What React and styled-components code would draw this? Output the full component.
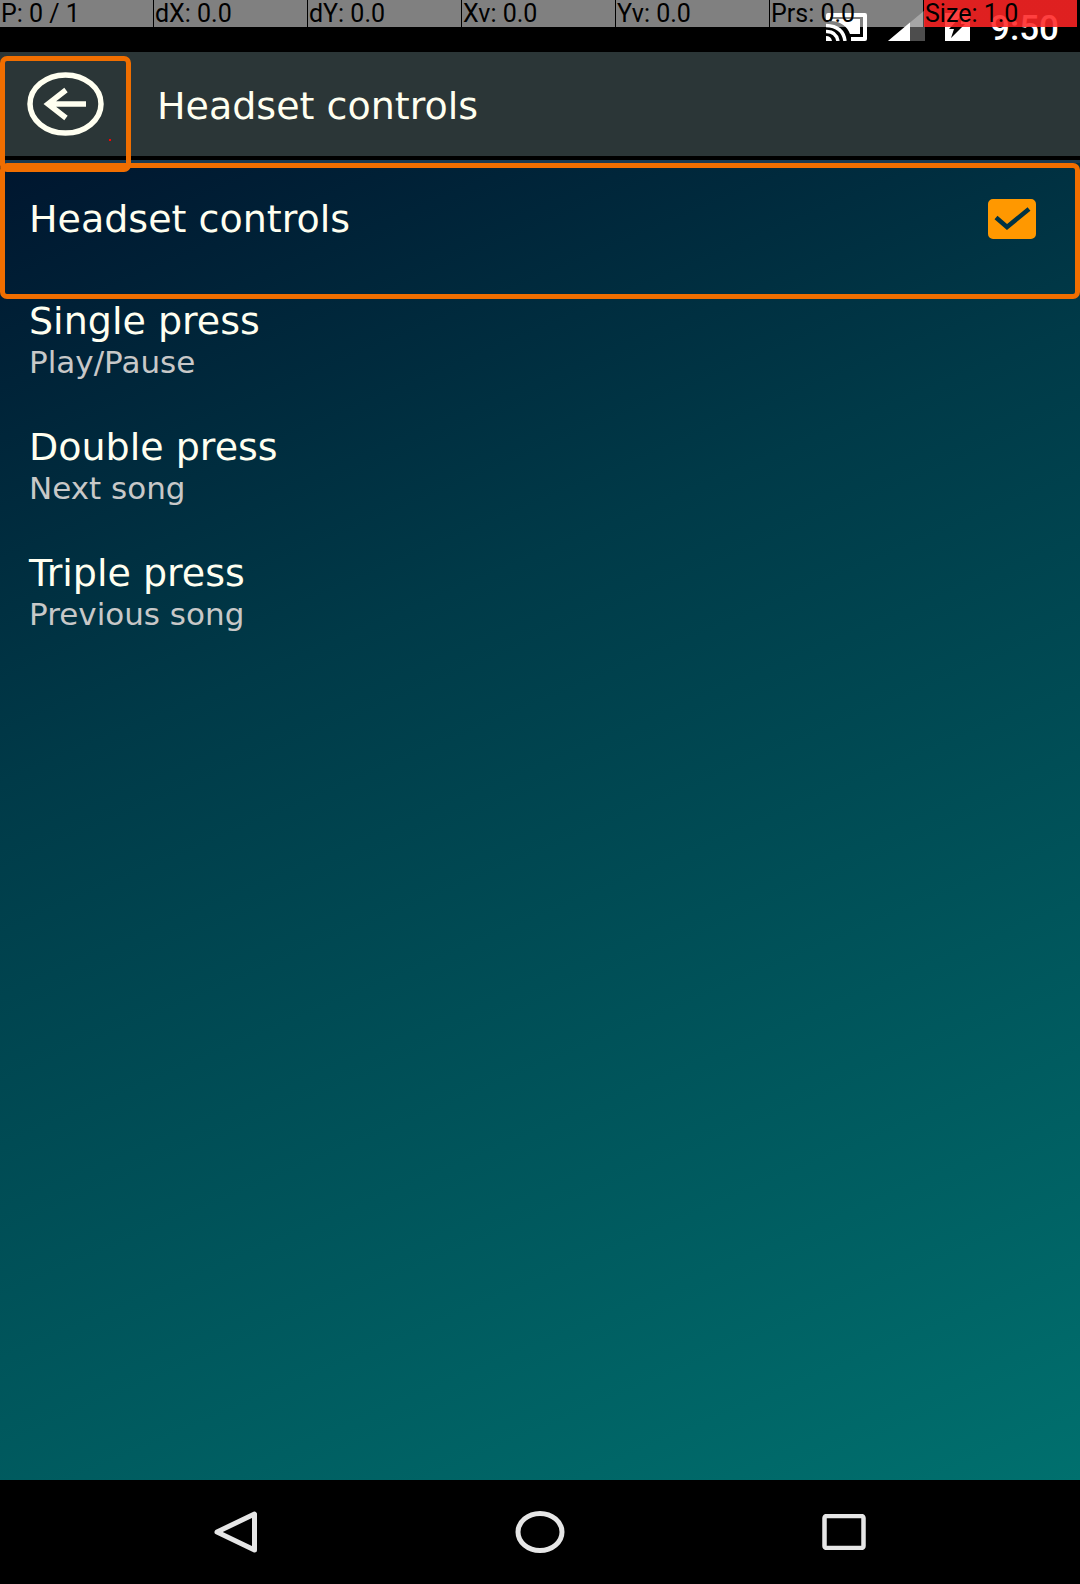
import React, { useState } from "react";
import styled, { createGlobalStyle } from "styled-components";

const sans = '"DejaVu Sans", sans-serif';
const roboto = 'Roboto, "Liberation Sans", sans-serif';
const orange = "#f06e00";

const GlobalStyle = createGlobalStyle`
  * { box-sizing: border-box; }
  body { margin: 0; background: #000; }
`;

const Screen = styled.div`
  display: flex;
  flex-direction: column;
  min-height: 100vh;
  background: #000;
  font-family: ${sans};
`;

const StatusBar = styled.div`
  position: relative;
  display: flex;
  justify-content: flex-end;
  align-items: flex-end;
  height: 52px;
  padding: 0 21px 11px 0;
  background: #000;
  color: #fff;
`;

const StatusIcons = styled.div`
  display: flex;
  align-items: flex-end;
  gap: 20px;
  svg { display: block; }
`;

const Clock = styled.time`
  font: 500 35px/24px ${roboto};
`;

const PointerBar = styled.div`
  position: absolute;
  top: 0;
  left: 0;
  right: 0;
  display: grid;
  grid-template-columns: repeat(7, 1fr);
  gap: 1px;
  height: 27px;
  padding-right: 3px;
`;

const PointerCell = styled.span`
  padding-left: 1px;
  font: 400 25px/27px ${roboto};
  white-space: nowrap;
  color: #000;
  background: ${(p) =>
    p.$hot
      ? "linear-gradient(rgba(255, 0, 0, 0.75), rgba(255, 0, 0, 0.75)), rgba(255, 255, 255, 0.5)"
      : "rgba(255, 255, 255, 0.5)"};
`;

const AppBar = styled.header`
  display: flex;
  align-items: center;
  gap: 26px;
  height: 108px;
  background: #2b3637;
  border-bottom: 4px solid #000;
`;

const BackButton = styled.button`
  position: relative;
  align-self: stretch;
  display: flex;
  align-items: center;
  width: 131px;
  padding: 0 0 0 26px;
  border: 0;
  background: none;
  &::before {
    content: "";
    position: absolute;
    right: 20px;
    bottom: 15px;
    width: 2px;
    height: 2px;
    background: #f00;
  }
  &::after {
    content: "";
    position: absolute;
    z-index: 1;
    inset: 4px 0 -16px;
    border: 5px solid ${orange};
    border-radius: 7px;
  }
`;

const Title = styled.h1`
  margin: 0;
  padding-top: 4px;
  font: 400 38px/44px ${sans};
  color: #fffff0;
`;

const Settings = styled.main`
  flex: 1;
  border-top: 3px solid #1b3a50;
  background: linear-gradient(157deg, #00162f 0%, #003a48 35%, #00706e 100%);
`;

const ToggleRow = styled.label`
  display: flex;
  justify-content: space-between;
  align-items: center;
  height: 136px;
  padding: 0 39px 24px 24px;
  border: 5px solid ${orange};
  border-radius: 7px;
  font-size: 38px;
  line-height: 44px;
  color: #fffff0;
`;

const CheckWrap = styled.span`
  display: grid;
  > * { grid-area: 1 / 1; }
  svg { pointer-events: none; visibility: hidden; }
  input:checked + svg { visibility: visible; }
`;

const Checkbox = styled.input`
  appearance: none;
  width: 48px;
  height: 40px;
  margin: 0;
  border: 4px solid #ff9800;
  border-radius: 5px;
  &:checked { background: #ff9800; }
`;

const ActionRow = styled.button`
  display: flex;
  flex-direction: column;
  align-items: flex-start;
  width: 100%;
  height: 126px;
  padding: 0 29px;
  border: 0;
  background: none;
  text-align: left;
`;

const ActionName = styled.span`
  font: 400 38px/44px ${sans};
  color: #fffff0;
`;

const ActionValue = styled.span`
  font: 400 31px/38px ${sans};
  color: #c8c8c8;
`;

const NavBar = styled.nav`
  display: flex;
  justify-content: center;
  height: 104px;
  background: #000;
`;

const NavButton = styled.button`
  display: grid;
  place-items: center;
  flex: 0 1 304px;
  padding: 0;
  border: 0;
  background: none;
`;

const readings = ["P: 0 / 1", "dX: 0.0", "dY: 0.0", "Xv: 0.0", "Yv: 0.0", "Prs: 0.0", "Size: 1.0"];

const actions = [
  { name: "Single press", value: "Play/Pause" },
  { name: "Double press", value: "Next song" },
  { name: "Triple press", value: "Previous song" },
];

const CastIcon = () => (
  <svg width="42" height="28" viewBox="0 0 42 28">
    <path d="M2 9V2H39V26H25" fill="none" stroke="#fff" strokeWidth="4" strokeLinejoin="round" />
    <path d="M6 6H34V21H24C21 13 15 9 6 8Z" fill="#fff" />
    <path d="M0 23Q5 23 6 28H0Z" fill="#fff" />
    <path d="M0 18.5Q10 18 12 28M0 12.5Q17 13 19 28" fill="none" stroke="#fff" strokeWidth="3.5" />
  </svg>
);

const SignalIcon = () => (
  <svg width="37" height="31" viewBox="0 0 37 31">
    <path d="M37 0V31H0Z" fill="#fff" fillOpacity="0.3" />
    <path d="M22 12.5V31H0Z" fill="#fff" />
  </svg>
);

const BatteryIcon = () => (
  <svg width="25" height="31" viewBox="0 0 25 31">
    <path d="M0 3H8V0H17V3H25V31H0Z" fill="#fff" />
    <path d="M16 6V14H20L6 28L9 19H4Z" fill="#000" />
  </svg>
);

export default function App() {
  const [enabled, setEnabled] = useState(true);

  return (
    <Screen>
      <GlobalStyle />
      <StatusBar>
        <StatusIcons>
          <CastIcon />
          <SignalIcon />
          <BatteryIcon />
          <Clock>9:50</Clock>
        </StatusIcons>
        <PointerBar>
          {readings.map((text) => (
            <PointerCell key={text} $hot={text.startsWith("Size")}>{text}</PointerCell>
          ))}
        </PointerBar>
      </StatusBar>
      <AppBar>
        <BackButton aria-label="Back">
          <svg width="78" height="64" viewBox="0 0 78 64" fill="none" stroke="#fffff0">
            <ellipse cx="39.5" cy="32" rx="35.5" ry="29" strokeWidth="5.5" />
            <path d="M60 32H22M40 18L22 32L40 46" strokeWidth="5.5" />
          </svg>
        </BackButton>
        <Title>Headset controls</Title>
      </AppBar>
      <Settings>
        <ToggleRow>
          Headset controls
          <CheckWrap>
            <Checkbox type="checkbox" checked={enabled} onChange={(e) => setEnabled(e.target.checked)} />
            <svg width="48" height="40" viewBox="0 0 48 40">
              <path d="M8 18.5L19 28L41 10" fill="none" stroke="#003344" strokeWidth="4.5" />
            </svg>
          </CheckWrap>
        </ToggleRow>
        {actions.map((action) => (
          <ActionRow key={action.name}>
            <ActionName>{action.name}</ActionName>
            <ActionValue>{action.value}</ActionValue>
          </ActionRow>
        ))}
      </Settings>
      <NavBar>
        <NavButton aria-label="Back">
          <svg width="44" height="42" viewBox="0 0 44 42">
            <path d="M40.5 3V39L3 21Z" fill="none" stroke="#e6e6e6" strokeWidth="5" strokeLinejoin="round" />
          </svg>
        </NavButton>
        <NavButton aria-label="Home">
          <svg width="50" height="42" viewBox="0 0 50 42">
            <ellipse cx="25" cy="21" rx="22" ry="18.5" fill="none" stroke="#e6e6e6" strokeWidth="5" />
          </svg>
        </NavButton>
        <NavButton aria-label="Recent apps">
          <svg width="44" height="36" viewBox="0 0 44 36">
            <rect x="2.5" y="2" width="39" height="32" rx="2" fill="none" stroke="#e6e6e6" strokeWidth="4.5" />
          </svg>
        </NavButton>
      </NavBar>
    </Screen>
  );
}
